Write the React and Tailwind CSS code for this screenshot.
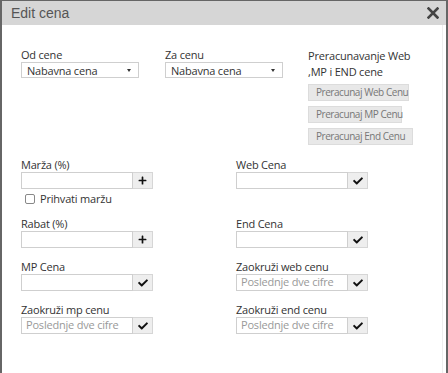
import React from 'react';
import { FaPlus, FaCheck } from 'react-icons/fa';

const font = { fontFamily: '"Open Sans", "Noto Sans", sans-serif' };

const Select = ({ value }) => (
  <div className="flex h-[16px] w-[118px] items-center justify-between border border-[#cfcfcf] pl-[5px] pr-[7px] text-[11px] leading-none text-[#333]">
    <span>{value}</span>
    <span className="h-0 w-0 border-x-[2.5px] border-t-[3px] border-x-transparent border-t-[#333]" />
  </div>
);

const Field = ({ label, placeholder, icon = 'check', children }) => (
  <div className="flex flex-col">
    <div className="h-[14px] text-[11px] leading-[14px] text-[#333]">{label}</div>
    <div className="flex h-[17px] w-[132px]">
      <div className="flex h-full w-[112px] items-center border border-[#cfcfcf] bg-white pl-[4px] text-[11px] text-[#999]">
        {placeholder}
      </div>
      <div className="flex h-full w-[20px] items-center justify-center border border-l-0 border-[#d6d6d6] bg-[#eeeeee] text-[#111]">
        {icon === 'plus' ? <FaPlus size={9} /> : <FaCheck size={10} />}
      </div>
    </div>
    {children}
  </div>
);

const CalcButton = ({ children, w }) => (
  <div className={`flex h-[17px] items-center whitespace-nowrap border border-[#dcdcdc] bg-[#e8e8e8] pl-[7px] text-[10px] tracking-[-0.45px] text-[#777] ${w}`}>
    {children}
  </div>
);

export default function App() {
  return (
    <div style={font} className="flex h-[373px] w-[448px] flex-col border-x-2 border-t border-[#666] bg-white tracking-[-0.2px]">
      <div className="flex h-[24px] shrink-0 items-center justify-between bg-[#d6d6d6] pl-[9px] pr-[7px] tracking-normal">
        <span className="text-[14px] text-[#555]" style={{ fontFamily: '"Liberation Sans", Arial, sans-serif' }}>
          Edit cena
        </span>
        <svg width="12" height="12" viewBox="0 0 12 12">
          <path d="M1.5 1.5 L10.5 10.5 M10.5 1.5 L1.5 10.5" stroke="#444" strokeWidth="2.6" strokeLinecap="square" />
        </svg>
      </div>

      <div className="mr-[3px] flex flex-1 flex-col border-r border-[#eeeeee] pl-[19px] pt-[22px]">
        <div className="flex items-start">
          <div className="w-[144px] pt-[1px]">
            <div className="h-[14px] text-[11px] leading-[14px] text-[#333]">Od cene</div>
            <Select value="Nabavna cena" />
          </div>
          <div className="w-[143px] pt-[1px]">
            <div className="h-[14px] text-[11px] leading-[14px] text-[#333]">Za cenu</div>
            <Select value="Nabavna cena" />
          </div>
          <div className="flex flex-col pt-[1px]">
            <div className="text-[11px] leading-[16px] text-[#333]">
              Preracunavanje Web
              <br />
              ,MP i END cene
            </div>
            <div className="mt-[4px] flex flex-col gap-[5px]">
              <CalcButton w="w-[101px]">Preracunaj Web Cenu</CalcButton>
              <CalcButton w="w-[94px]">Preracunaj MP Cenu</CalcButton>
              <CalcButton w="w-[105px]">Preracunaj End Cenu</CalcButton>
            </div>
          </div>
        </div>

        <div className="mt-[13px] grid grid-cols-[215px_auto] gap-y-[12px]">
          <Field label="Marža (%)" icon="plus">
            <label className="mt-[4px] flex h-[12px] items-center gap-[5px] pl-[4px] text-[11px] text-[#333]">
              <span className="h-[10px] w-[10px] rounded-[2px] border border-[#888] bg-white" />
              Prihvati maržu
            </label>
          </Field>
          <Field label="Web Cena" />
          <Field label="Rabat (%)" icon="plus" />
          <Field label="End Cena" />
          <Field label="MP Cena" />
          <Field label="Zaokruži web cenu" placeholder="Poslednje dve cifre" />
          <Field label="Zaokruži mp cenu" placeholder="Poslednje dve cifre" />
          <Field label="Zaokruži end cenu" placeholder="Poslednje dve cifre" />
        </div>
      </div>
    </div>
  );
}
